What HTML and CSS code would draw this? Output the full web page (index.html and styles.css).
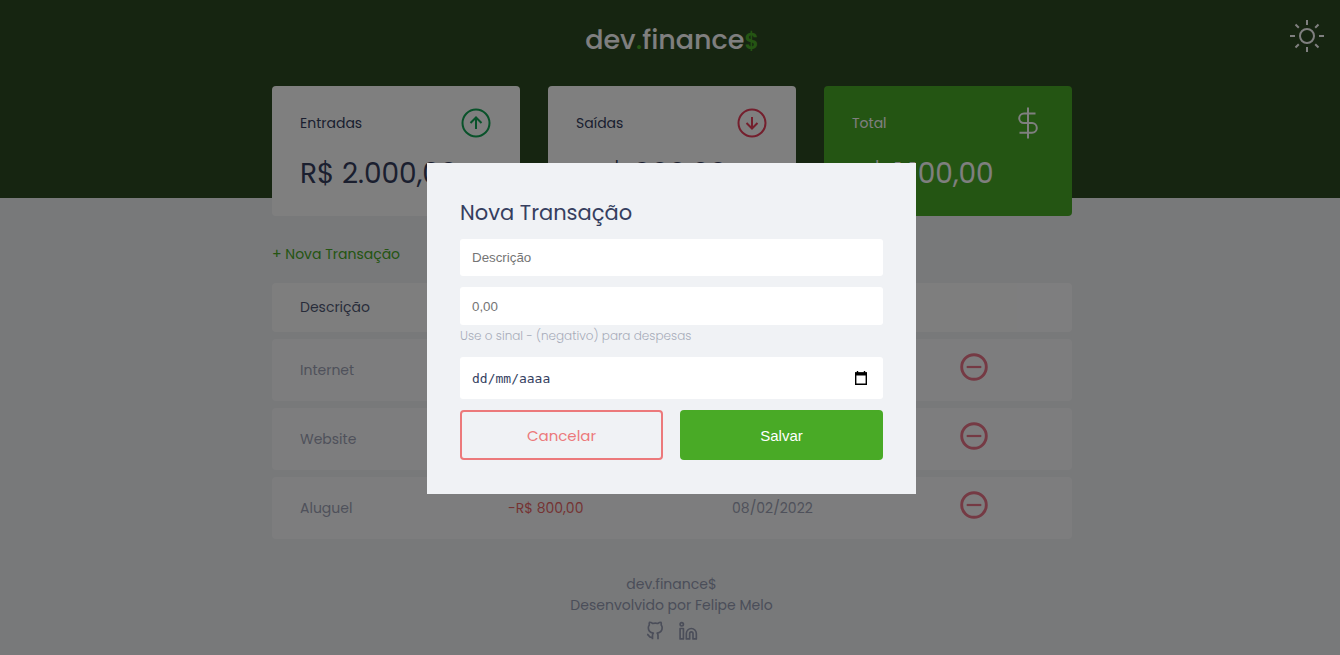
FILE: index.html
```html
<!DOCTYPE html>
<html lang="pt-BR">
<head>
<meta charset="utf-8">
<title>dev.finance$</title>
<link rel="stylesheet" href="styles.css">
</head>
<body>
<svg class="symbols" aria-hidden="true">
  <symbol id="minus" viewBox="0 0 28 28"><circle cx="14" cy="14" r="12.3" fill="none" stroke="currentColor" stroke-width="2.9"/><path d="M6.7 14h14.6" stroke="currentColor" stroke-width="2.2"/></symbol>
</svg>
<header class="header">
  <h1 class="logo">dev<span>.</span>finance<b>$</b></h1>
  <button class="theme" type="button" aria-label="Alternar tema">
    <svg viewBox="0 0 36 36" width="36" height="36" fill="none" stroke="currentColor" stroke-width="2"><circle cx="18" cy="18" r="7"/><path d="M18 2v5M18 29v5M1 18h5M30 18h5M6.500 6.500l3.300 3.300M26.200 26.200l3.300 3.300M29.500 6.500l-3.300 3.300M9.800 26.200l-3.300 3.300"/></svg>
  </button>
</header>
<main class="container">
  <section class="balance">
    <div class="card">
      <h3>Entradas <svg viewBox="0 0 32 32" class="icon up"><circle cx="16" cy="16" r="13.500"/><path d="M16 22V10.500M10.500 16l5.500-5.500 5.500 5.500"/></svg></h3>
      <p>R$ 2.000,00</p>
    </div>
    <div class="card">
      <h3>Saídas <svg viewBox="0 0 32 32" class="icon down"><circle cx="16" cy="16" r="13.500"/><path d="M16 10v11.500M10.500 16l5.500 5.500 5.500-5.500"/></svg></h3>
      <p>-R$ 900,00</p>
    </div>
    <div class="card total">
      <h3>Total <svg viewBox="0 0 32 32" class="icon dollar"><path d="M16 .5v31M23.500 6.500H12a4.800 4.800 0 0 0 0 9.600h8a4.800 4.800 0 0 1 0 9.600H7.500"/></svg></h3>
      <p>R$ 1.100,00</p>
    </div>
  </section>
  <section class="transactions">
    <a class="new" href="#">+ Nova Transação</a>
    <table>
      <thead><tr><th class="c-desc">Descrição</th><th class="c-value">Valor</th><th class="c-date">Data</th><th></th></tr></thead>
      <tbody>
        <tr><td>Internet</td><td class="expense">-R$ 100,00</td><td>08/02/2022</td><td><button class="remove" type="button" aria-label="Remover Internet"><svg width="28" height="28"><use href="#minus"/></svg></button></td></tr>
        <tr><td>Website</td><td class="income">R$ 2.000,00</td><td>08/02/2022</td><td><button class="remove" type="button" aria-label="Remover Website"><svg width="28" height="28"><use href="#minus"/></svg></button></td></tr>
        <tr><td>Aluguel</td><td class="expense">-R$ 800,00</td><td>08/02/2022</td><td><button class="remove" type="button" aria-label="Remover Aluguel"><svg width="28" height="28"><use href="#minus"/></svg></button></td></tr>
      </tbody>
    </table>
  </section>
</main>
<footer class="footer">
  <p>dev.finance$</p>
  <p>Desenvolvido por Felipe Melo</p>
  <nav class="social">
    <a href="#" aria-label="GitHub"><svg viewBox="0 0 24 24"><path d="M9 22v-4.500c0-1.500.3-2.300 1-3-3.500-.4-6-1.800-6-6.300 0-1.300.4-2.500 1.200-3.400-.3-1-.2-2.200.2-3.300 1.500 0 2.800.7 3.900 1.500a12 12 0 0 1 6 0c1.100-.8 2.400-1.500 3.900-1.500.4 1.100.5 2.300.2 3.300.8.900 1.200 2.100 1.200 3.400 0 4.500-2.500 5.900-6 6.300.7.700 1 1.500 1 3V22M9 19.500c-3 1-4-1-4.800-2.300-.5-.7-1-1-1.700-1.200"/></svg></a>
    <a href="#" aria-label="LinkedIn"><svg viewBox="0 0 24 24"><circle cx="4.500" cy="4" r="2"/><path d="M2.500 9h4v12.500h-4zM10 21.500V15a6 6 0 0 1 12 0v6.500h-4V15a2 2 0 0 0-4 0v6.500z"/></svg></a>
  </nav>
</footer>
<div class="overlay">
  <div class="modal" role="dialog" aria-labelledby="modal-title">
    <h2 id="modal-title">Nova Transação</h2>
    <form>
      <input class="field" type="text" aria-label="Descrição" placeholder="Descrição">
      <div>
        <input class="field amount" type="text" inputmode="decimal" aria-label="Valor" placeholder="0,00" aria-describedby="help">
        <small id="help">Use o sinal - (negativo) para despesas</small>
      </div>
      <div class="date">
        <input type="text" aria-label="Data" placeholder="dd/mm/aaaa">
        <button type="button" aria-label="Abrir calendário"><svg viewBox="0 0 14 15" width="14" height="15"><path d="M3.500 0v3M10.500 0v3" stroke="#000" stroke-width="1.400"/><path d="M1.700 2h10.600v11.300H1.700z" fill="none" stroke="#000" stroke-width="1.400"/><path d="M1 1.500h12V4.500H1z"/></svg></button>
      </div>
      <div class="actions">
        <button class="cancel" type="button">Cancelar</button>
        <button class="save" type="submit">Salvar</button>
      </div>
    </form>
  </div>
</div>
</body>
</html>
```
FILE: styles.css
```css
* { box-sizing: border-box; margin: 0; padding: 0; }
body {
  background: #f0f2f5;
  color: #363f5f;
  font-family: Poppins, Inter, "Open Sans", sans-serif;
  font-size: 14px;
  font-weight: 400;
  line-height: 21px;
}
button { background: none; border: 0; font-family: inherit; cursor: pointer; }
a { color: inherit; text-decoration: none; }
.symbols { display: none; }

.header {
  position: relative;
  background: #2d4a22;
  padding: 19px 0 135px 4px;
  text-align: center;
}
.logo { color: #fff; font-size: 27px; font-weight: 500; line-height: 42px; }
.logo span { color: #49aa26; }
.logo b { color: #49aa26; font-size: 22px; font-weight: 600; }
.theme { position: absolute; top: 18px; right: 15px; color: #fff; }
.theme svg { display: block; }

.container { width: min(90vw, 800px); margin: 0 auto; position: relative; left: 2px; }
.balance { display: grid; grid-template-columns: repeat(3, 1fr); gap: 28px; margin-top: -112px; }
.card { background: #fff; border-radius: 4px; padding: 21px 28px; }
.card h3 {
  display: flex;
  align-items: center;
  justify-content: space-between;
  font-size: 14px;
  font-weight: 400;
}
.card p { margin-top: 14px; font-size: 28px; line-height: 42px; white-space: nowrap; }
.icon { width: 32px; height: 32px; fill: none; stroke-width: 2; }
.up { stroke: #12a454; }
.down { stroke: #e83f5b; }
.dollar { stroke: #fff; }
.total { background: #49aa26; color: #fff; }

.transactions { margin-top: 28px; }
.new { display: block; width: fit-content; color: #49aa26; margin-bottom: 11px; }
table { width: 100%; table-layout: fixed; border-collapse: separate; border-spacing: 0 7px; }
tr > * { background: #fff; padding: 14px 28px; text-align: left; font-weight: 400; }
tr > :first-child { border-radius: 4px 0 0 4px; }
tr > :last-child { border-radius: 0 4px 4px 0; }
thead tr { opacity: .85; }
tbody tr { opacity: .7; color: #7c829c; height: 62px; }
.c-desc { width: 26%; }
.c-value { width: 28%; }
.c-date { width: 28.5%; }
.income { color: #12a454; }
.expense { color: #e92929; }
.remove { display: block; color: #e83f5b; margin-bottom: 6px; }
.remove svg { display: block; }
tbody td { padding-top: 0; padding-bottom: 0; }

.footer { padding: 28px 0 14px 3px; text-align: center; color: #969cb3; }
.social { display: flex; justify-content: center; gap: 13px; padding-top: 5px; }
.social svg { display: block; width: 20px; height: 20px; fill: none; stroke: currentColor; stroke-width: 2; stroke-linejoin: round; }

.overlay {
  position: fixed;
  inset: 0;
  display: flex;
  align-items: center;
  justify-content: center;
  padding: 2px 0 0 3px;
  background: rgba(0, 0, 0, .5);
}
.modal { width: min(90vw, 489px); background: #f0f2f5; padding: 34px 33px; }
.modal h2 { font-size: 21px; font-weight: 400; line-height: 32px; margin-bottom: 10px; }
form { display: grid; gap: 11px; }
.field, .date { width: 100%; border: 0; border-radius: 3px; background: #fff; }
.field { display: block; height: 37px; padding: 0 12px; font-family: Arial, "Liberation Sans", sans-serif; }
.amount { height: 38px; }
::placeholder { color: #757575; opacity: 1; }
small { display: block; font-size: 12px; font-weight: 300; color: #363f5f; opacity: .4; padding-top: 1px; line-height: 20px; }
.date { display: flex; align-items: center; height: 42px; padding: 0 15px 0 12px; }
.date input { flex: 1; min-width: 0; border: 0; font-family: "DejaVu Sans Mono", monospace; font-size: 13px; }
.date input::placeholder { color: #363f5f; }
.date svg { display: block; }
.actions { display: grid; grid-template-columns: 1fr 1fr; gap: 17px; }
.actions button { height: 50px; border-radius: 4px; }
.cancel { border: 2px solid #ec797b; color: #ec797b; font-size: 15px; font-weight: 400; }
.actions .save { background: #49aa26; color: #fff; font-family: Arial, "Liberation Sans", sans-serif; font-size: 15px; }
```
